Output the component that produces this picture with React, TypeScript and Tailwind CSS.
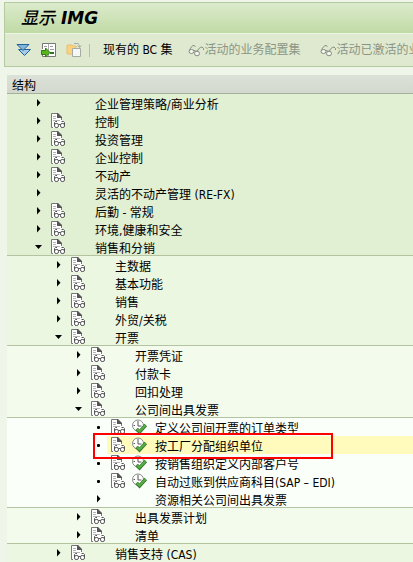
import type { ReactNode } from "react";

type Kind = "closed" | "open" | "leaf";

interface Node {
  label: string;
  level: 0 | 1 | 2 | 3;
  kind: Kind;
  doc?: boolean;
  last?: boolean;
  selected?: boolean;
}

const nodes: Node[] = [
  { label: "企业管理策略/商业分析", level: 0, kind: "closed" },
  { label: "控制", level: 0, kind: "closed", doc: true },
  { label: "投资管理", level: 0, kind: "closed", doc: true },
  { label: "企业控制", level: 0, kind: "closed", doc: true },
  { label: "不动产", level: 0, kind: "closed", doc: true },
  { label: "灵活的不动产管理 (RE-FX)", level: 0, kind: "closed" },
  { label: "后勤 - 常规", level: 0, kind: "closed", doc: true },
  { label: "环境,健康和安全", level: 0, kind: "closed", doc: true },
  { label: "销售和分销", level: 0, kind: "open", doc: true, last: true },
  { label: "主数据", level: 1, kind: "closed", doc: true },
  { label: "基本功能", level: 1, kind: "closed", doc: true },
  { label: "销售", level: 1, kind: "closed", doc: true },
  { label: "外贸/关税", level: 1, kind: "closed", doc: true },
  { label: "开票", level: 1, kind: "open", doc: true, last: true },
  { label: "开票凭证", level: 2, kind: "closed", doc: true },
  { label: "付款卡", level: 2, kind: "closed", doc: true },
  { label: "回扣处理", level: 2, kind: "closed", doc: true },
  { label: "公司间出具发票", level: 2, kind: "open", doc: true, last: true },
  { label: "定义公司间开票的订单类型", level: 3, kind: "leaf", doc: true },
  { label: "按工厂分配组织单位", level: 3, kind: "leaf", doc: true, selected: true },
  { label: "按销售组织定义内部客户号", level: 3, kind: "leaf", doc: true },
  { label: "自动过账到供应商科目(SAP – EDI)", level: 3, kind: "leaf", doc: true },
  { label: "资源相关公司间出具发票", level: 3, kind: "closed", last: true },
  { label: "出具发票计划", level: 2, kind: "closed", doc: true },
  { label: "清单", level: 2, kind: "closed", doc: true, last: true },
  { label: "销售支持 (CAS)", level: 1, kind: "closed", doc: true },
];

const levelStyle = [
  "pl-[25px] bg-[#e1efd3]",
  "pl-[45px] bg-[#ebf7e1]",
  "pl-[65px] bg-[#f3fbed]",
  "pl-[85px] bg-[#fafffa]",
];

function Marker({ kind }: { kind: Kind }) {
  return (
    <svg width="10" height="10" viewBox="0 0 10 10" aria-hidden="true">
      {kind === "closed" && <path d="M5 1 L8.5 4.8 L5 8.6 Z" fill="#000" />}
      {kind === "open" && <path d="M3 3 H10 L6.5 7 Z" fill="#000" />}
      {kind === "leaf" && <rect x="5" y="4" width="3" height="3" rx="1" fill="#000" />}
    </svg>
  );
}

function DocIcon() {
  return (
    <svg width="15" height="16" viewBox="0 0 15 16" fill="none" aria-hidden="true">
      <path d="M1 0 H8 L12 4 V9 H14 V15 H1 Z" fill="#fff" />
      <path d="M3 14.5 H1.5 V.5 H8 M11.5 5 V7" stroke="#777" />
      <path d="M7 0 H8 L12 4 V5 H7 Z" fill="#555" />
      <path d="M3 3.5 H6 M3 5.5 H6 M3 7.5 H10" stroke="#b5b5b5" />
      <rect x="4.5" y="10.5" width="4" height="4" rx="1.6" stroke="#555" />
      <rect x="10.5" y="10.5" width="4" height="4" rx="1.6" stroke="#555" />
      <path d="M4.5 12.5 V9.5 L5.5 8.5 H7 M14.5 12.5 V9.5 L13.5 8.5 H11.5 M8.5 11.5 H10.5" stroke="#555" />
    </svg>
  );
}

function ExecuteIcon() {
  return (
    <svg width="17" height="16" viewBox="0 0 17 16" fill="none" aria-hidden="true">
      <circle cx="7" cy="6.5" r="5.5" fill="#fff" stroke="#888" />
      <path d="M7 2 V7 H10.5 M2.5 6.5 H4 M7 9.5 V11.5" stroke="#555" />
      <path d="M5.5 10 L8.5 13 L14.8 6" stroke="#31752f" strokeWidth="3.4" />
      <path d="M5.8 10 L8.5 12.5 L14.5 6.2" stroke="#58ad45" strokeWidth="2" />
    </svg>
  );
}

function Glasses() {
  return (
    <svg width="17" height="13" viewBox="0 0 17 13" fill="none" stroke="#858a80" aria-hidden="true">
      <path d="M1.5 7 C2 4 4 1.5 6 1.5 L7.5 2.5 M9 8 C10 5 12 3 14 3 L15.5 4.5 V6 M6 6.5 L9 7.5" />
      <ellipse cx="3.5" cy="7.5" rx="2.5" ry="2" fill="#f4f7f0" />
      <ellipse cx="9" cy="9.5" rx="2.5" ry="2.3" fill="#f4f7f0" />
    </svg>
  );
}

function ExpandIcon() {
  return (
    <svg width="16" height="14" viewBox="0 0 16 14" aria-hidden="true">
      <path d="M2.5 6.5 H14.5 L8.5 12.5 Z" fill="#a4cbe7" stroke="#246398" />
      <path d="M1 1.5 H13 L7 7.5 Z" fill="#82b4dc" stroke="#246398" />
    </svg>
  );
}

function PositionIcon() {
  return (
    <svg width="16" height="16" viewBox="0 0 16 16" fill="none" aria-hidden="true">
      <path d="M1.5 7 V1.5 H14.5 V14.5 H1.5 V13" fill="#fff" stroke="#777" />
      <path d="M7.5 2 V14" stroke="#aaa" />
      <path d="M3 4.5 H6 M9 4.5 H12 M9 7.5 H13" stroke="#999" />
      <path d="M9 11 H13" stroke="#29752b" strokeWidth="2" />
      <path d="M.5 8.5 H4.5 V6 L9 10.5 L4.5 15 V12.5 H.5 Z" fill="#5bb51c" stroke="#2d7a16" />
    </svg>
  );
}

function CopyIcon() {
  return (
    <svg width="16" height="16" viewBox="0 0 16 16" fill="none" aria-hidden="true">
      <path d="M1 3 H6 L7 4 H10 V12 H1 Z" fill="#fbd37f" stroke="#e9bd72" />
      <path d="M6.5 6.5 H14.5 V14.5 H6.5 Z" fill="#f6f8f5" stroke="#a7aaa4" />
      <path d="M8 1.5 H11 C13 1.5 13.5 3 13.5 5 M11.5 3.5 L13.5 5.5 L15.5 3.5" stroke="#a7aaa4" />
    </svg>
  );
}

function TextButton({ children, muted }: { children: ReactNode; muted?: boolean }) {
  return (
    <button
      type="button"
      disabled={muted}
      className={`flex shrink-0 items-center whitespace-nowrap ${muted ? "pr-1 text-[#8c9585]" : "text-black"}`}
    >
      {muted && <Glasses />}
      {children}
    </button>
  );
}

function TreeRow({ node }: { node: Node }) {
  return (
    <li
      role="treeitem"
      aria-level={node.level + 1}
      aria-expanded={node.kind === "leaf" ? undefined : node.kind === "open"}
      aria-selected={!!node.selected}
      className={`flex h-[18px] items-stretch ${levelStyle[node.level]} ${node.last ? "border-b border-[#b4c4a0]" : ""}`}
    >
      <div className="flex w-[15px] shrink-0 items-start pt-1">
        <Marker kind={node.kind} />
      </div>
      <div className={`relative flex min-w-0 flex-1 items-start pl-[3px] ${node.selected ? "bg-[#fffbbd]" : ""}`}>
        <span className="flex w-[45px] shrink-0 items-center gap-[6px] pt-px">
          {node.doc && <DocIcon />}
          {node.kind === "leaf" && <ExecuteIcon />}
        </span>
        <span className="whitespace-nowrap pt-[2px]">{node.label}</span>
        {node.selected && (
          <span className="pointer-events-none absolute -top-[3px] -left-[14px] z-10 h-[26px] w-[240px] border-2 border-[#ff0000]" />
        )}
      </div>
    </li>
  );
}

export default function App() {
  return (
    <main className="overflow-hidden bg-[#f0f5ea] pl-1 pt-[2px] font-['DejaVu_Sans_Condensed','Noto_Sans_CJK_SC',sans-serif] text-[12px] leading-[18px] text-black">
      <header className="border-y border-l border-[#b4cba1] bg-[#dfe9d0]">
        <h1 className="flex h-[31px] items-center gap-[6px] border-b border-[#edf5e5] bg-linear-to-b from-[#dcebcc] to-[#c0daa5] pl-4 font-['DejaVu_Sans','Noto_Sans_CJK_SC',sans-serif] text-[17px] italic">
          <span className="font-medium">显示</span>
          <span className="font-bold">IMG</span>
        </h1>
        <div className="flex h-8 items-center overflow-hidden pl-[11px]">
          <div className="flex shrink-0 items-center gap-[9px]">
            <button type="button" aria-label="展开"><ExpandIcon /></button>
            <button type="button" aria-label="定位"><PositionIcon /></button>
            <button type="button" aria-label="复制" disabled><CopyIcon /></button>
          </div>
          <span className="mr-[13px] ml-[7px] h-[13px] w-px shrink-0 bg-[#a9cb91]" />
          <div className="flex gap-[15px]">
            <TextButton>现有的 BC 集</TextButton>
            <TextButton muted>活动的业务配置集</TextButton>
            <TextButton muted>活动已激活的业务配置集</TextButton>
          </div>
        </div>
      </header>
      <section className="mt-2 pl-[3px]">
        <h2 id="structure" className="h-[19px] border-b border-[#a5b29b] bg-linear-to-b from-[#dce2d8] to-[#d2d8ce] pl-[5px] pt-[2px]">
          结构
        </h2>
        <ul role="tree" aria-labelledby="structure">
          {nodes.map((node, i) => (
            <TreeRow key={i} node={node} />
          ))}
        </ul>
      </section>
    </main>
  );
}
